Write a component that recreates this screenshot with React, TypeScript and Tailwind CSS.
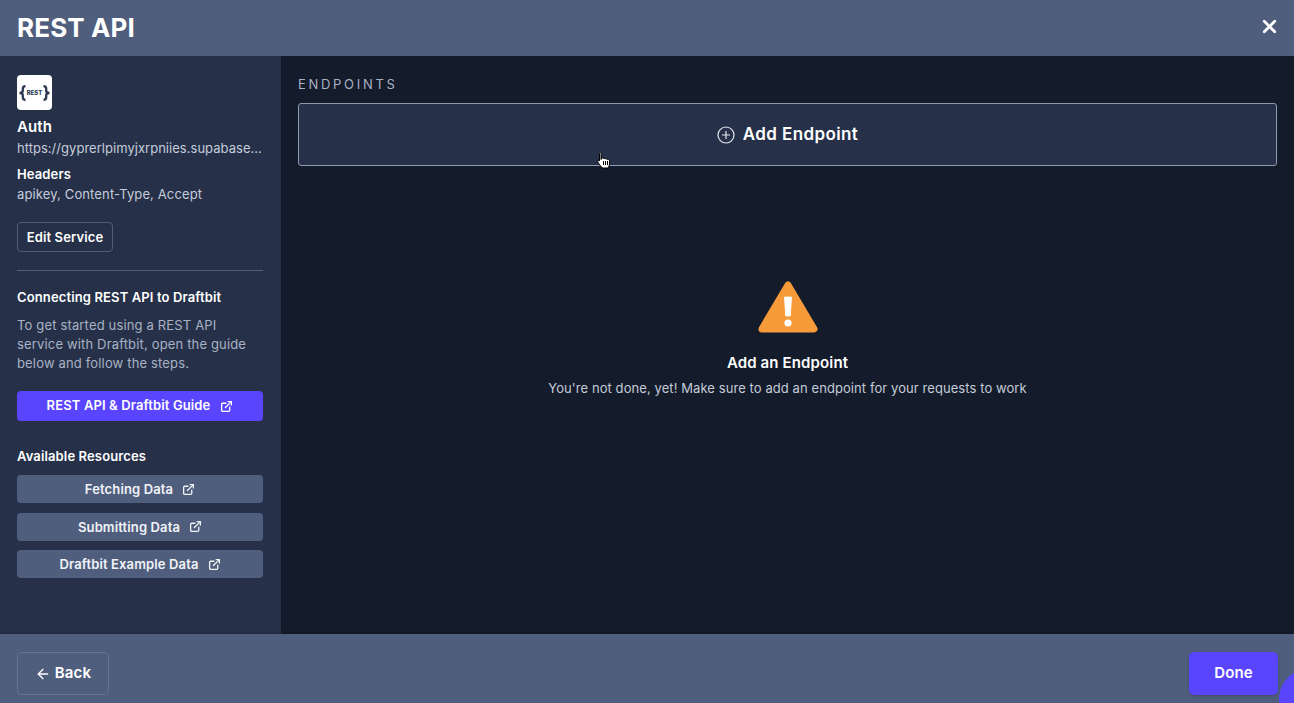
import { ArrowLeft, ExternalLink, X } from 'lucide-react';

const font = { fontFamily: 'Inter, sans-serif' };

function Brace({ flip }: { flip?: boolean }) {
  return (
    <svg width="7" height="16" viewBox="0 0 7 16" fill="none" stroke="#2b3750" strokeWidth="2.3" className={flip ? '-scale-x-100' : ''}>
      <path d="M6.500 1.200C4.500 1.200 3.800 2 3.800 3.800V5.800C3.800 7 2.500 8 .5 8C2.500 8 3.800 9 3.800 10.200V12.200C3.800 14 4.500 14.800 6.500 14.800" />
    </svg>
  );
}

function ResourceButton({ label }: { label: string }) {
  return (
    <button className="h-[28px] w-full rounded-[4px] bg-[#505e7e] flex items-center justify-center gap-[9px] text-[13px] font-semibold text-[#f1f3f7]">
      <span className="leading-[20px]">{label}</span>
      <ExternalLink size={13} strokeWidth={2.4} />
    </button>
  );
}

function Sidebar() {
  return (
    <aside className="w-[281px] shrink-0 bg-[#263149] pl-[17px] pr-[18px] pt-[19px]">
      <div className="w-[35px] h-[35px] rounded-[4px] bg-white flex items-center justify-center gap-[0.5px] text-[#2b3750]">
        <Brace />
        <span className="text-[6px] leading-none font-extrabold tracking-normal">REST</span>
        <Brace flip />
      </div>
      <div className="mt-[7px] text-[15px] leading-[20px] font-semibold text-white">Auth</div>
      <div className="mt-[1px] text-[13px] leading-[20px] tracking-[0.03px] text-[#c5ccd9] whitespace-nowrap">https://gyprerlpimyjxrpniies.supabase...</div>
      <div className="mt-[6px] text-[13px] leading-[20px] font-semibold text-white">Headers</div>
      <div className="text-[13px] leading-[20px] text-[#c5ccd9]">apikey, Content-Type, Accept</div>
      <button className="mt-[18px] h-[30px] w-[96px] pt-[1px] rounded-[4px] border border-[#505e7e] text-[13px] font-semibold text-white">Edit Service</button>
      <div className="mt-[18px] h-px bg-[#505e7e]" />
      <div className="mt-[16px] text-[13px] leading-[20px] font-semibold text-white">Connecting REST API to Draftbit</div>
      <p className="mt-[9px] max-w-[232px] text-[13px] leading-[19px] tracking-[0.16px] text-[#a9b2c3]">To get started using a REST API service with Draftbit, open the guide below and follow the steps.</p>
      <button className="mt-[18px] h-[30px] w-full rounded-[4px] bg-[#5a45ff] flex items-center justify-center gap-[10px] text-[13px] font-semibold text-white">
        REST API &amp; Draftbit Guide
        <ExternalLink size={13} strokeWidth={2.4} />
      </button>
      <div className="mt-[25px] text-[13px] leading-[20px] font-semibold text-white">Available Resources</div>
      <div className="mt-[9px] flex flex-col gap-[9.5px]">
        <ResourceButton label="Fetching Data" />
        <ResourceButton label="Submitting Data" />
        <ResourceButton label="Draftbit Example Data" />
      </div>
    </aside>
  );
}

function Main() {
  return (
    <main className="flex-1 bg-[#141b2b] pl-[17px] pr-[17px] pt-[20px] flex flex-col">
      <div className="text-[13px] leading-[16px] tracking-[2.7px] text-[#a9b2c3]">ENDPOINTS</div>
      <button className="mt-[11px] h-[63px] w-full rounded-[3px] border border-[#8f9ab0] bg-[#263149] flex items-center justify-center gap-[8px] text-[17px] tracking-[0.4px] font-semibold text-white">
        <svg width="18" height="18" viewBox="0 0 18 18" fill="none" stroke="#e5e8ee" strokeWidth="1.2">
          <circle cx="9" cy="9" r="8" />
          <path d="M9 5v8M5 9h8" />
        </svg>
        Add Endpoint
      </button>
      <div className="mt-[115px] flex flex-col items-center">
        <svg width="60" height="53" viewBox="0 0 60 53">
          <path d="M30 4 L56 48 H4 Z" fill="#f79a3a" stroke="#f79a3a" strokeWidth="7" strokeLinejoin="round" />
          <path d="M26.500 16 h7 l-1.200 19 h-4.600 Z" fill="#fff" stroke="#fff" strokeWidth="0.8" strokeLinejoin="round" />
          <circle cx="30" cy="42" r="3.600" fill="#fff" />
        </svg>
        <div className="mt-[19px] text-[15px] leading-[20px] font-semibold text-white">Add an Endpoint</div>
        <div className="mt-[5px] text-[13px] leading-[20px] tracking-[0.08px] text-[#c5ccd9]">You're not done, yet! Make sure to add an endpoint for your requests to work</div>
      </div>
    </main>
  );
}

export default function App() {
  return (
    <div className="relative w-[1294px] h-[703px] overflow-hidden flex flex-col bg-[#141b2b] tracking-[0.13px]" style={font}>
      <header className="h-[56px] shrink-0 bg-[#505e7e] pl-[17px] pr-[14px] flex items-center justify-between">
        <h1 className="text-[26px] font-bold text-white mt-[-1px]">REST API</h1>
        <X size={21} strokeWidth={3.2} className="text-white mt-[-4px]" />
      </header>
      <div className="flex flex-1 min-h-0">
        <Sidebar />
        <Main />
      </div>
      <footer className="h-[69px] shrink-0 bg-[#505e7e] pl-[17px] pr-[16px] pt-[18px] flex items-start justify-between shadow-[0_-1px_3px_rgba(0,0,0,0.25)]">
        <button className="h-[43px] w-[92px] rounded-[5px] border border-[#67748f] flex items-center justify-center gap-[4px] text-[15px] font-semibold text-white">
          <ArrowLeft size={16} strokeWidth={2} />
          Back
        </button>
        <button className="h-[43px] w-[89px] rounded-[5px] bg-[#5a45ff] text-[15px] font-semibold text-white shadow-[0_1px_3px_rgba(0,0,0,0.2)]">Done</button>
      </footer>
      <div className="absolute left-[1279px] top-[669px] w-[60px] h-[60px] rounded-full bg-[#5a45ff]" />
      <svg className="absolute left-[597px] top-[151px]" width="14" height="18" viewBox="0 0 14 18">
        <path d="M2.500 1C3.300 1 4 1.500 4 2.500V8.500L5 6.800C5.800 6.600 6.300 7 6.500 7.500C7.200 7 8 7.300 8.300 7.900C9 7.500 9.800 7.800 10.100 8.400C11 8.200 12.500 8.600 12.500 9.800V13C12.500 14.800 11.500 16 11 17H5.500C4.500 16 2.500 14 .8 11C.3 9.800 1.300 8.800 2.500 9.800V2.500C2 1.500 2 1 2.500 1Z" fill="#fff" stroke="#000" strokeWidth="1" strokeLinejoin="round" />
        <path d="M6.500 10v4M8.500 10v4M10.500 10v4" stroke="#000" strokeWidth="1" />
      </svg>
    </div>
  );
}
